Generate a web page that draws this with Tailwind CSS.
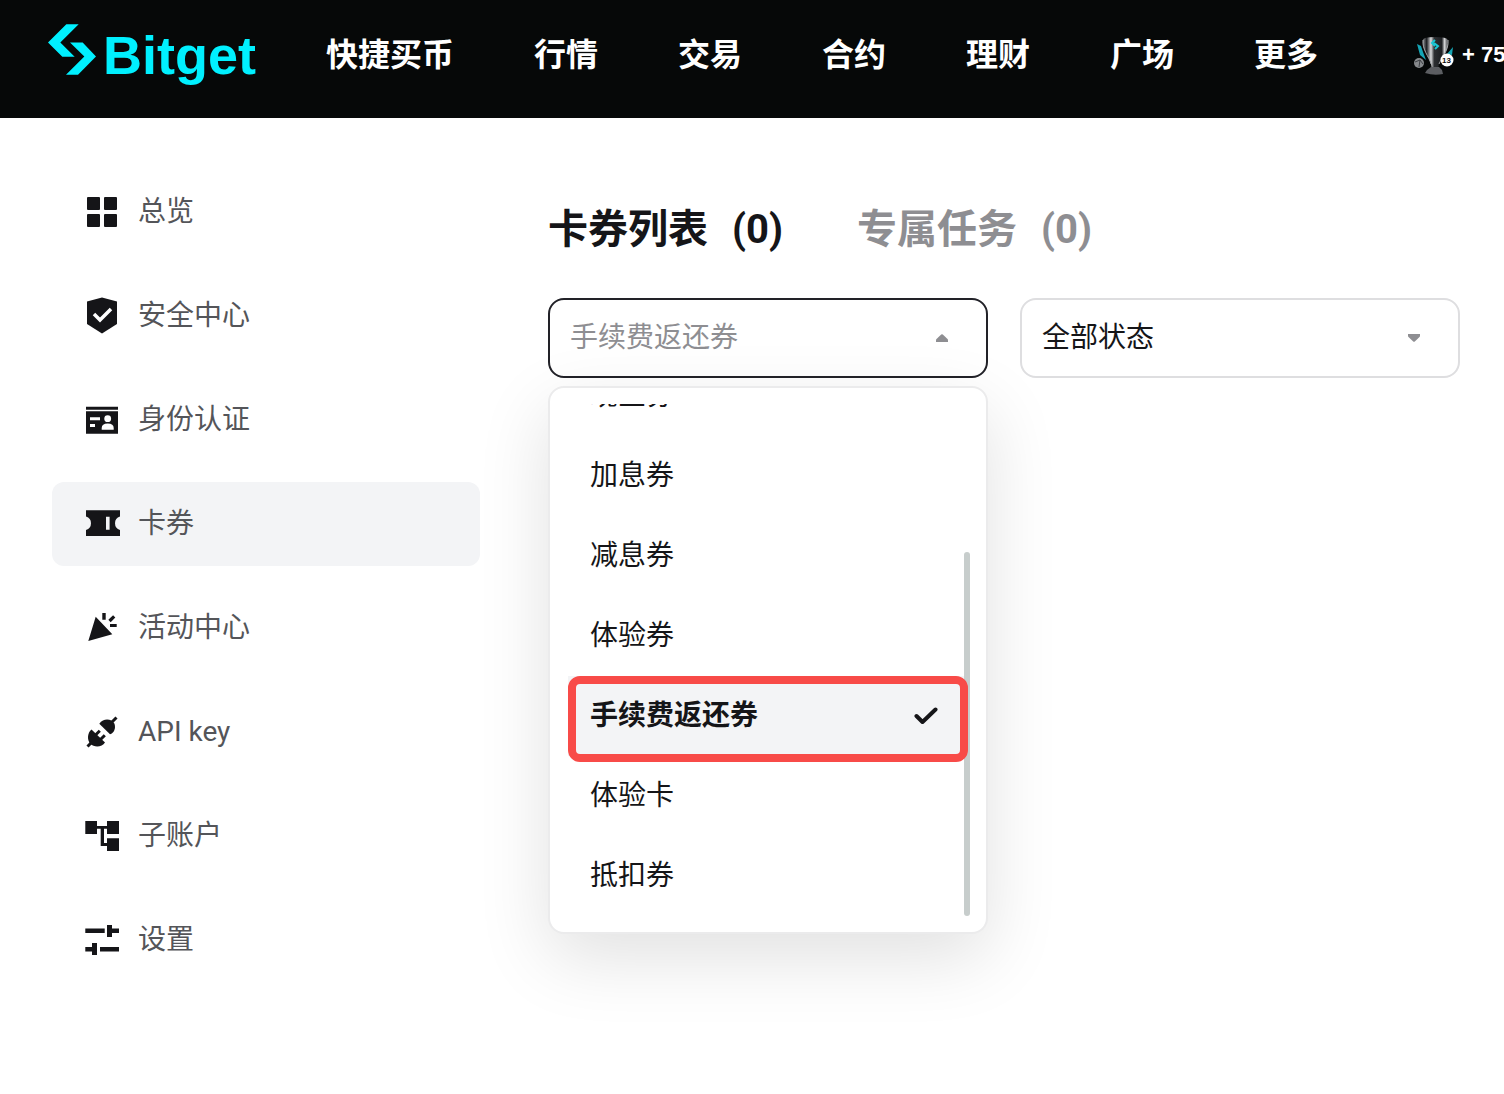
<!doctype html>
<html lang="zh-CN">
  <head>
    <meta charset="UTF-8" />
    <meta name="viewport" content="width=device-width, initial-scale=1.0" />
    <title>卡券 | Bitget</title>
    <script src="https://cdn.jsdelivr.net/npm/@tailwindcss/browser@4"></script>
  </head>
  <body class="min-h-screen bg-white text-[#151518] font-[Roboto,'Noto_Sans_CJK_SC',sans-serif] overflow-x-hidden">
    <!-- 顶部导航 -->
    <header class="flex h-[118px] items-center overflow-hidden bg-[#060808] pl-12 pb-2 text-white whitespace-nowrap">
      <a href="#" class="flex shrink-0 items-center gap-[7px] text-[#00f0ff]">
        <svg class="mb-3 h-[51px] w-12" viewBox="53 42 144 152" fill="currentColor" aria-hidden="true">
          <path d="M108 42h37L90 97l43 43H96L53 97z" />
          <path d="M119 97h38l40 42-54 55h-36l55-55z" />
        </svg>
        <span class="font-['Liberation_Sans',sans-serif] text-[54px] leading-[64px] font-bold">Bitget</span>
      </a>
      <nav class="ml-[70px] flex shrink-0 gap-20 text-[32px] leading-10 font-bold">
        <a href="#">快捷买币</a>
        <a href="#">行情</a>
        <a href="#">交易</a>
        <a href="#">合约</a>
        <a href="#">理财</a>
        <a href="#">广场</a>
        <a href="#">更多</a>
      </nav>
      <a href="#" class="ml-[94px] flex shrink-0 items-center gap-2">
        <svg class="size-[42px]" viewBox="0 0 42 42" aria-hidden="true">
          <defs>
            <linearGradient id="cup" x1="0" x2="1">
              <stop offset="0" stop-color="#8b8d90" />
              <stop offset=".15" stop-color="#1d1f22" />
              <stop offset=".32" stop-color="#dcdddf" />
              <stop offset=".45" stop-color="#2c2e31" />
              <stop offset=".75" stop-color="#1d1f22" />
              <stop offset=".86" stop-color="#d4d5d7" />
              <stop offset="1" stop-color="#333538" />
            </linearGradient>
          </defs>
          <path d="M5 10l4 2 2 6 3 8-6-5zM41 13l-1 8-5-1z" fill="#15a5b5" />
          <path d="M11 6q0-3 12-3t13 3c1 10-6 17-9 24l-1 5h-6l-1-5C17 22 10 16 11 6z" fill="url(#cup)" />
          <path d="M36 6c1 10-6 17-9 24M11 6c-1 10 6 16 8 24" fill="none" stroke="#a5a7aa" />
          <path d="M19 33h8l3 3 1 4q-9 2-18-1l2-3z" fill="#5c5e62" />
          <path d="M23 6l-3 3 3 3M22 9l4 3-3 3" fill="none" stroke="#19c7d4" stroke-width="2" />
          <circle cx="7" cy="29" r="5" fill="#86898c" />
          <path d="M3 28l5-2 3 4M7 33l1-7" fill="none" stroke="#3d4044" />
          <circle cx="35" cy="26" r="6.500" fill="#fff" />
          <text x="30" y="29" font-size="8" font-weight="700" font-family="Liberation Sans" fill="#111">13</text>
        </svg>
        <span class="font-['Liberation_Sans',sans-serif] text-[22px] leading-7 font-bold">+ 75</span>
      </a>
    </header>

    <div class="flex items-start gap-[68px] pr-11 pl-[52px]">
      <!-- 左侧菜单 -->
      <aside class="w-[428px] shrink-0 pt-[52px]">
        <ul class="flex flex-col gap-5 text-[28px] leading-10 text-[#545559]">
          <li>
            <a href="#" class="flex h-[84px] items-center gap-4 rounded-xl px-[30px]">
              <svg class="size-10 fill-[#151518]" viewBox="0 0 40 40" aria-hidden="true">
                <rect x="5" y="5" width="13" height="13" rx="1" />
                <rect x="22" y="5" width="13" height="13" rx="1" />
                <rect x="5" y="22" width="13" height="13" rx="1" />
                <rect x="22" y="22" width="13" height="13" rx="1" />
              </svg>
              总览
            </a>
          </li>
          <li>
            <a href="#" class="flex h-[84px] items-center gap-4 rounded-xl px-[30px]">
              <svg class="size-10 fill-[#151518]" viewBox="0 0 40 40" aria-hidden="true">
                <path d="M20 1.500l15 4V28l-15 9.500L5 28V5.500z" />
                <path d="M12 18l6 6L29 13" fill="none" stroke="#fff" stroke-width="3.500" />
              </svg>
              安全中心
            </a>
          </li>
          <li>
            <a href="#" class="flex h-[84px] items-center gap-4 rounded-xl px-[30px]">
              <svg class="size-10 fill-[#151518]" viewBox="0 0 40 40" aria-hidden="true">
                <path d="M4 6.700h32v3H4zM4 11.300h32v22.400H4z" />
                <path d="M8 17.300h10v3H8zM8 24h5v3H8zM19.700 29.700v-1.700q0-4.600 6-4.600t6 4.600v1.700z" fill="#fff" />
                <circle cx="25.700" cy="18.700" r="3.400" fill="#fff" />
              </svg>
              身份认证
            </a>
          </li>
          <li>
            <a href="#" aria-current="page" class="flex h-[84px] items-center gap-4 rounded-xl bg-[#f3f4f6] px-[30px]">
              <svg class="size-10 fill-[#151518]" viewBox="0 0 40 40" aria-hidden="true">
                <path fill-rule="evenodd" d="M4 6.300h34v6.200a7 7 0 0 0 0 13.400V32H4v-6.100a7 7 0 0 0 0-13.400zM24 12.700v13h3.600v-13z" />
              </svg>
              卡券
            </a>
          </li>
          <li>
            <a href="#" class="flex h-[84px] items-center gap-4 rounded-xl px-[30px]">
              <svg class="size-10 fill-[#151518]" viewBox="0 0 40 40" aria-hidden="true">
                <path d="M13.700 8.700l16.600 17.600L6.300 33zM20.300 5h3.400v6.700h-3.400zM28 16h6.700v3H28z" />
                <path d="M27.500 13l4.700-4.700" stroke="#151518" stroke-width="3.200" />
              </svg>
              活动中心
            </a>
          </li>
          <li>
            <a href="#" class="flex h-[84px] items-center gap-4 rounded-xl px-[30px]">
              <svg class="size-10 fill-[#151518]" viewBox="0 0 40 40" aria-hidden="true">
                <path d="M17.300 11.700L28 22.300c4-1 6-6 4.500-10.500-3-5.500-11-6-15.200-.100z" />
                <path d="M9.500 17.500L23 30.500c-3 5-11 5-14.500 1.500S5 21 9.500 17.500z" />
                <path d="M30 10l4.500-4.500M5.500 34.500L10 30M13.500 23l4.300-4.300M18.500 27.500l4.300-4.300" stroke="#151518" stroke-width="3" />
              </svg>
              API key
            </a>
          </li>
          <li>
            <a href="#" class="flex h-[84px] items-center gap-4 rounded-xl px-[30px]">
              <svg class="size-10 fill-[#151518]" viewBox="0 0 40 40" aria-hidden="true">
                <path d="M3.300 5H15v5h10V5h12v13H25v-5.200h-3V27h3v-4.700h12V35H25v-5h-6.300V12.800H15V18H3.300z" />
              </svg>
              子账户
            </a>
          </li>
          <li>
            <a href="#" class="flex h-[84px] items-center gap-4 rounded-xl px-[30px]">
              <svg class="size-10 fill-[#151518]" viewBox="0 0 40 40" aria-hidden="true">
                <path d="M3.300 8.500h19.400V13H3.300zM25 5h5v3.500h7V13h-7v4h-5zM3.300 27H10v-4h5v12h-5v-3.500H3.300zM18 27h19v4.500H18z" />
              </svg>
              设置
            </a>
          </li>
        </ul>
      </aside>

      <!-- 卡券列表 -->
      <main class="min-w-0 flex-1 pt-[84px]">
        <div class="flex gap-[74px] text-[40px] leading-[56px] font-bold whitespace-nowrap">
          <button type="button" class="flex gap-6">卡券列表 <span>(0)</span></button>
          <button type="button" class="flex gap-6 text-[#8e8e92]">专属任务 <span>(0)</span></button>
        </div>

        <div class="mt-10 flex gap-8 text-[28px] leading-10">
          <div class="relative flex-1">
            <select aria-label="卡券类型" class="h-20 w-full appearance-none rounded-2xl border-2 border-[#222228] bg-white px-5 text-[#8e8e92] outline-none">
              <option>手续费返还券</option>
            </select>
            <svg class="pointer-events-none absolute top-9 right-10 h-2 w-3 fill-[#8e8e92]" viewBox="0 0 12 8" aria-hidden="true">
              <path d="M5.200.500q.8-.700 1.600 0L11.500 5q.5.500.5 1.200V8H0V6.200Q0 5.500.5 5z" />
            </svg>

            <!-- 下拉选项 -->
            <div class="absolute top-[88px] left-0 w-full rounded-2xl border-2 border-[#ebebec] bg-white py-4 shadow-[0_24px_72px_rgba(0,0,0,0.12)]">
              <ul class="flex h-[512px] flex-col justify-end overflow-hidden px-[18px]">
                <li><button type="button" class="h-20 w-full px-[22px] text-left">现金券</button></li>
                <li><button type="button" class="h-20 w-full px-[22px] text-left">加息券</button></li>
                <li><button type="button" class="h-20 w-full px-[22px] text-left">减息券</button></li>
                <li><button type="button" class="h-20 w-full px-[22px] text-left">体验券</button></li>
                <li>
                  <button type="button" class="flex h-20 w-full items-center justify-between bg-[#f3f4f6] pr-[30px] pl-[22px] font-bold">
                    手续费返还券
                    <svg class="h-5 w-6" viewBox="0 0 24 20" fill="none" stroke="#151518" stroke-width="4" stroke-linecap="round" stroke-linejoin="round" aria-hidden="true">
                      <path d="M2.500 10l6 6L21.500 3.500" />
                    </svg>
                  </button>
                </li>
                <li><button type="button" class="h-20 w-full px-[22px] text-left">体验卡</button></li>
                <li><button type="button" class="h-20 w-full px-[22px] text-left">抵扣券</button></li>
              </ul>
              <div class="absolute right-4 bottom-4 h-[364px] w-1.5 rounded-full bg-[#c7cdcc]"></div>
              <div class="pointer-events-none absolute top-72 right-[18px] left-[18px] h-[86px] rounded-xl border-8 border-[#f84b48]"></div>
            </div>
          </div>

          <div class="relative flex-1">
            <select aria-label="卡券状态" class="h-20 w-full appearance-none rounded-2xl border-2 border-[#dedee0] px-5 outline-none">
              <option>全部状态</option>
            </select>
            <svg class="pointer-events-none absolute top-9 right-10 h-2 w-3 fill-[#8e8e92]" viewBox="0 0 12 8" aria-hidden="true">
              <path d="M5.200 7.500q.8.700 1.600 0L11.500 3q.5-.500.5-1.200V0H0v1.800Q0 2.500.5 3z" />
            </svg>
          </div>
        </div>
      </main>
    </div>
  </body>
</html>
